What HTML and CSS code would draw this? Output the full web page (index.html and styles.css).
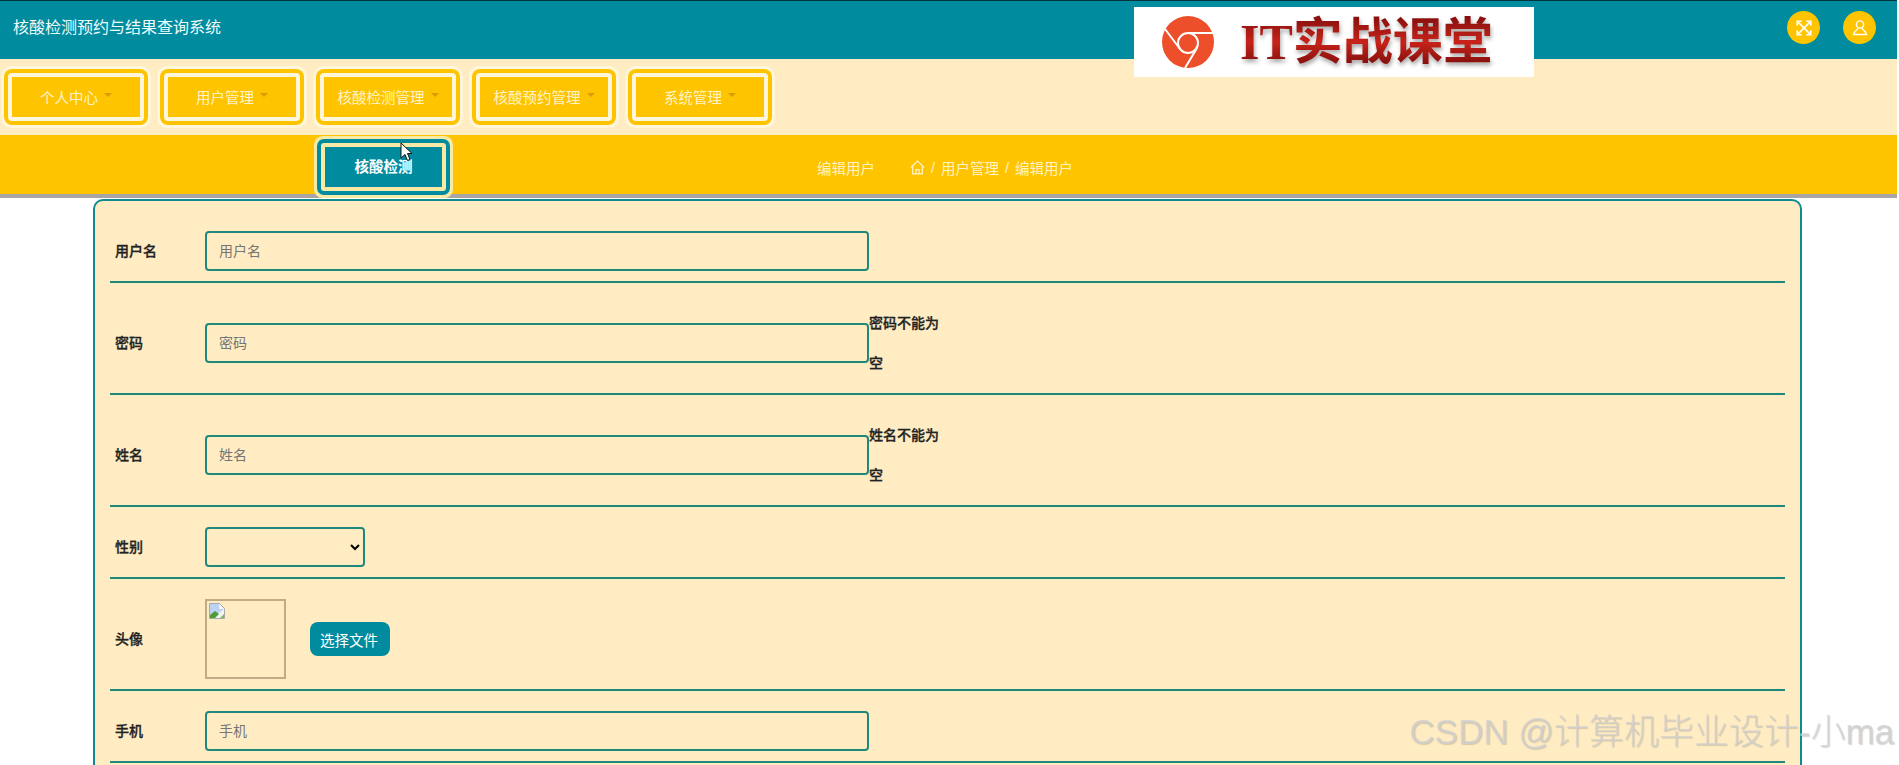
FILE: index.html
```html
<!DOCTYPE html>
<html>
<head>
    <title>核酸检测预约与结果查询系统</title>
    <meta charset="utf-8">
    <link rel="stylesheet" href="styles.css">
</head>
<body>
    <div class="topo">
        <div class="titulo">核酸检测预约与结果查询系统</div>
        <div class="topo-icones">
            <span class="circulo">
                <svg width="18" height="18" viewBox="0 0 16 16" fill="none" stroke="#fff" stroke-width="1.4">
                    <path d="M3 3l10 10M13 3L3 13"/>
                    <path d="M2 6V2h4M10 2h4v4M14 10v4h-4M6 14H2v-4"/>
                </svg>
            </span>
            <span class="circulo">
                <svg width="18" height="18" viewBox="0 0 18 18" fill="none" stroke="#fff" stroke-width="1.4">
                    <circle cx="9" cy="5.5" r="3.6"/>
                    <path d="M7 9.2C6.6 11 3 12 2.5 15.5h13C15 12 11.4 11 11 9.2"/>
                </svg>
            </span>
        </div>
    </div>

    <!-- logo colado por cima do topo -->
    <div class="logo">
        <svg width="52" height="52" viewBox="0 0 52 52">
            <circle cx="26" cy="26" r="26" fill="#ee4f2b"/>
            <g fill="none" stroke="#fff" stroke-width="2">
                <circle cx="26" cy="27" r="10"/>
                <path d="M3 13l15 20M26 17h25M35 32L23 52"/>
            </g>
        </svg>
        <span class="logo-texto">IT实战课堂</span>
    </div>

    <div class="menu">
        <div class="menu-item"><span>个人中心</span><i class="seta"></i></div>
        <div class="menu-item"><span>用户管理</span><i class="seta"></i></div>
        <div class="menu-item">
            <span>核酸检测管理</span><i class="seta"></i>
            <div class="submenu">核酸检测</div>
        </div>
        <div class="menu-item"><span>核酸预约管理</span><i class="seta"></i></div>
        <div class="menu-item"><span>系统管理</span><i class="seta"></i></div>
    </div>

    <div class="faixa">
        <span class="faixa-titulo">编辑用户</span>
        <div class="migalhas">
            <svg width="15" height="15" viewBox="0 0 14 14" fill="none" stroke="#fff3c8" stroke-width="1.2">
                <path d="M0.8 7L7 1l6.2 6M2.5 6v7h9V6M5.5 13V9h3v4"/>
            </svg>
            <span>/</span>
            <span>用户管理</span>
            <span>/</span>
            <span>编辑用户</span>
        </div>
    </div>

    <form class="quadro">
        <div class="linha">
            <label>用户名</label>
            <input type="text" placeholder="用户名">
        </div>
        <div class="linha">
            <label>密码</label>
            <input type="text" placeholder="密码">
            <div class="erro">密码不能为空</div>
        </div>
        <div class="linha">
            <label>姓名</label>
            <input type="text" placeholder="姓名">
            <div class="erro">姓名不能为空</div>
        </div>
        <div class="linha">
            <label>性别</label>
            <select><option></option></select>
        </div>
        <div class="linha">
            <label>头像</label>
            <div class="foto">
                <svg width="16" height="16" viewBox="0 0 16 16">
                    <path d="M0.5 0.5h10l5 5v10H0.5z" fill="#f4f4f4" stroke="#a8a8a8"/>
                    <path d="M1 1h9v5h5l-5 4-9 2z" fill="#bcd3f2"/>
                    <path d="M1 15v-3l5-4 4 3-4 4z" fill="#4f9a3a"/>
                    <path d="M11 15l4-4v4z" fill="#7cb86a"/>
                </svg>
            </div>
            <button type="button" class="botao">选择文件</button>
        </div>
        <div class="linha">
            <label>手机</label>
            <input type="text" placeholder="手机">
        </div>
    </form>

    <!-- ponteiro do mouse que aparece na captura -->
    <svg class="cursor" width="13" height="20" viewBox="0 0 13 20">
        <path d="M1 1v15l4-3.5 2.5 6 2.5-1-2.5-6H12z" fill="#fff" stroke="#111" stroke-width="1"/>
    </svg>

    <div class="marca">CSDN @计算机毕业设计-小ma</div>
</body>
</html>
```

FILE: styles.css
```css
html, body {
    height: 100%;
    overflow: hidden;
}
body {
    margin: 0 2px 0 0;
    background: white;
    font-family: "Liberation Sans", "Noto Sans CJK SC", sans-serif;
    font-size: 14px;
    color: #222;
}
.topo {
    height: 48px;
    padding-top: 10px;
    border-top: 1px solid #04343c;
    background: #018b9e;
    display: flex;
    justify-content: space-between;
}
.titulo {
    margin: 7px 0 0 13px;
    font-size: 16px;
    line-height: 20px;
    color: #eefbfd;
}
.topo-icones {
    display: flex;
    gap: 23px;
    padding-right: 21px;
    align-items: flex-start;
}
.circulo {
    width: 33px;
    height: 33px;
    border-radius: 50%;
    background: #ffc400;
    display: flex;
    justify-content: center;
    align-items: center;
}
.logo {
    position: absolute;
    left: 1134px;
    top: 7px;
    width: 372px;
    height: 70px;
    padding-left: 28px;
    background: white;
    display: flex;
    align-items: center;
    gap: 26px;
}
.logo-texto {
    font-family: "Liberation Serif", "Noto Sans CJK SC", serif;
    font-size: 50px;
    font-weight: bold;
    line-height: 60px;
    background: linear-gradient(180deg, #7a0c0c, #c8231a 50%, #6d0808);
    -webkit-background-clip: text;
    background-clip: text;
    color: transparent;
    filter: drop-shadow(1px 3px 2px rgba(0, 0, 0, 0.35));
}
.menu {
    height: 62px;
    padding: 14px 0 0 8px;
    background: #ffecc2;
    display: flex;
    gap: 20px;
}
.menu-item {
    position: relative;
    width: 128px;
    height: 38px;
    padding-bottom: 2px;
    background: #ffc400;
    border: 4px solid #fff6dc;
    box-shadow: 0 0 0 4px #ffc400, 0 0 0 7px #fff6dc;
    border-radius: 4px;
    display: flex;
    justify-content: center;
    align-items: center;
    gap: 6px;
    font-size: 14.5px;
    color: #fff3c8;
}
.seta {
    width: 0;
    height: 0;
    border-left: 4px solid transparent;
    border-right: 4px solid transparent;
    border-top: 4px solid #dc9c00;
    margin-top: -3px;
}
.submenu {
    position: absolute;
    left: -3px;
    top: 66px;
    width: 117px;
    height: 37px;
    padding-bottom: 3px;
    background: #018b9e;
    border: 4px solid #f6eaa6;
    box-shadow: 0 0 0 4px #018b9e, 0 0 0 7px #f6eaa6;
    border-radius: 3px;
    display: flex;
    justify-content: center;
    align-items: center;
    color: white;
    font-weight: bold;
    z-index: 2;
}
.faixa {
    height: 53px;
    padding: 6px 7px 0 0;
    background: #ffc400;
    border-bottom: 4px solid #a9a5a6;
    display: flex;
    justify-content: center;
    align-items: center;
    gap: 35px;
    font-size: 14.5px;
    color: #fff3c8;
}
.migalhas {
    display: flex;
    align-items: center;
    gap: 6px;
}
.quadro {
    margin: 1px 95px 0 93px;
    padding: 10px 15px 40px;
    background: #ffecc2;
    border: 2px solid #0f8a90;
    border-radius: 10px;
}
.linha {
    padding: 20px 0 10px 5px;
    border-bottom: 2px solid #1f8a7c;
    display: flex;
    align-items: center;
}
.linha label {
    width: 90px;
    margin-top: -2px;
    font-weight: 500;
    flex-shrink: 0;
    -webkit-text-stroke: 0.3px #222;
}
.linha input {
    width: 664px;
    height: 40px;
    box-sizing: border-box;
    padding: 0 12px;
    background: transparent;
    border: 2px solid #1f8a7c;
    border-radius: 4px;
    font-family: inherit;
    font-size: 14px;
}
.linha select {
    width: 160px;
    height: 40px;
    background: transparent;
    border: 2px solid #1f8a7c;
    border-radius: 4px;
}
.erro {
    width: 72px;
    line-height: 40px;
    font-weight: 500;
    -webkit-text-stroke: 0.3px #222;
}
.foto {
    width: 75px;
    height: 74px;
    padding: 2px 0 0 2px;
    border: 2px solid #c2a988;
}
.botao {
    width: 80px;
    height: 34px;
    margin-left: 24px;
    padding: 0 2px 0 0;
    background: #018b9e;
    border: none;
    border-radius: 8px;
    color: white;
    font-family: inherit;
    font-size: 14.5px;
}
.cursor {
    position: absolute;
    left: 400px;
    top: 142px;
    z-index: 3;
}
.marca {
    position: absolute;
    right: 5px;
    top: 710px;
    font-size: 35px;
    font-weight: 300;
    line-height: 44px;
    white-space: nowrap;
    color: rgba(208, 208, 208, 0.75);
    text-shadow: 1px 1px 1px rgba(120, 120, 120, 0.3);
    pointer-events: none;
}
```
